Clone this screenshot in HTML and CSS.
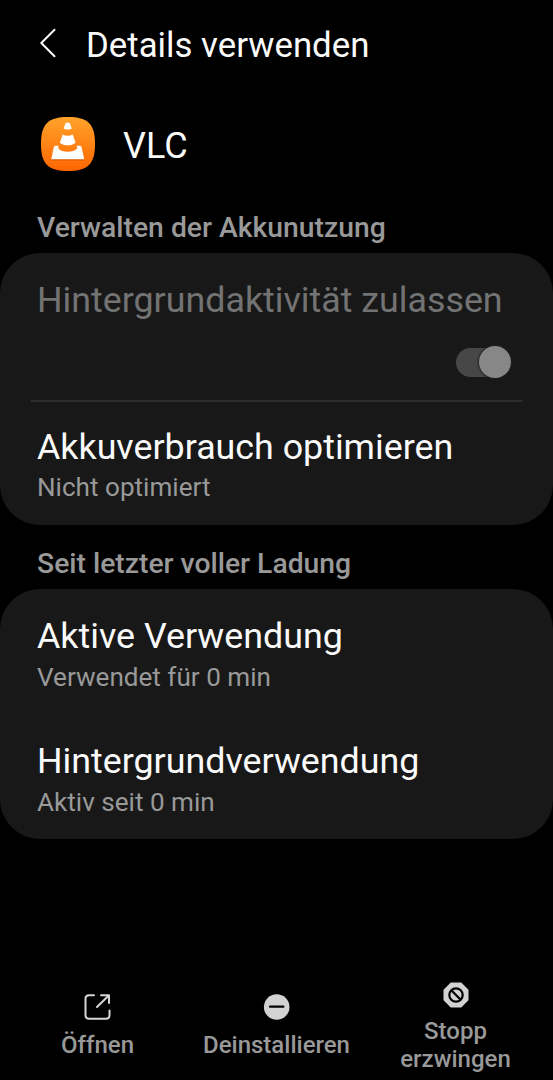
FILE: index.html
```html
<!DOCTYPE html>
<html lang="de">
<head>
<meta charset="utf-8">
<title>Details verwenden</title>
<link rel="stylesheet" href="styles.css">
</head>
<body>
<div class="screen">
  <header class="topbar">
    <svg class="back" viewBox="0 0 18 30"><path d="M15.5 1.7 2.3 15l13.2 13.3"/></svg>
    <h1 class="title">Details verwenden</h1>
  </header>
  <div class="app">
    <svg class="app-icon" viewBox="0 0 54 54">
      <defs><linearGradient id="orange" x1="0" y1="0" x2="0" y2="1"><stop offset="0" stop-color="#ffa32b"/><stop offset="1" stop-color="#ff6500"/></linearGradient></defs>
      <path fill="url(#orange)" d="M27 0C47 0 54 7 54 27S47 54 27 54 0 47 0 27 7 0 27 0Z"/>
      <path fill="#b84800" opacity=".55" d="M10.500 42h32.500v1.600h-32.500z"/>
      <path fill="#fff" d="M26.700 5.500c1.500 0 2.300.7 2.700 1.900l1.300 4c-2 1.500-6 1.500-8 0l1.300-4c.4-1.200 1.200-1.900 2.700-1.900ZM21.700 17.400c3 1.700 7 1.700 10 0l2.900 8.400c-4.200 3.400-11.600 3.400-15.800 0ZM14.800 28.700h2.900l-.6 2.600c3.800 4.700 15.400 4.700 19.200 0l-.6-2.600h2.900c1.100 0 1.700.5 2 1.600L43.200 42.200H10.200l2.600-11.900c.3-1.100.9-1.600 2-1.600Z"/>
    </svg>
    <span class="app-name">VLC</span>
  </div>
  <h2 class="section">Verwalten der Akkunutzung</h2>
  <div class="card">
    <div class="row row-switch">
      <div class="label disabled">Hintergrundaktivität zulassen</div>
      <div class="switch"><div class="thumb"></div></div>
    </div>
    <div class="row row-optimise">
      <div class="label">Akkuverbrauch optimieren</div>
      <div class="sub">Nicht optimiert</div>
    </div>
  </div>
  <h2 class="section">Seit letzter voller Ladung</h2>
  <div class="card">
    <div class="row row-usage">
      <div class="label">Aktive Verwendung</div>
      <div class="sub">Verwendet für 0 min</div>
    </div>
    <div class="row row-usage">
      <div class="label">Hintergrundverwendung</div>
      <div class="sub">Aktiv seit 0 min</div>
    </div>
  </div>
  <nav class="actions">
    <div class="action single">
      <svg class="action-icon" viewBox="0 0 28 28"><g fill="none" stroke="#d6d6d6" stroke-width="2" stroke-linecap="round" stroke-linejoin="round"><path d="M10 2.300H5Q1.500 2.300 1.500 5.800V22.200Q1.500 25.700 5 25.700H22Q25.500 25.700 25.500 22.200V17.500"/><path d="M17 2.300H25V10M24.500 2.800 13 14"/></g></svg>
      <span>Öffnen</span>
    </div>
    <div class="action single">
      <svg class="action-icon" viewBox="0 0 28 28"><circle cx="13.700" cy="14" r="12.800" fill="#d2d2d2"/><path d="M7 13.700h13.400" stroke="#000" stroke-width="2.200" stroke-linecap="round"/></svg>
      <span>Deinstallieren</span>
    </div>
    <div class="action">
      <svg class="action-icon" viewBox="0 0 28 28"><path fill="#d2d2d2" stroke="#d2d2d2" stroke-width="2" stroke-linejoin="round" d="M9.200 2.500h9.600l6.700 6.700v9.600l-6.700 6.700H9.200l-6.700-6.700V9.200Z"/><g fill="none" stroke="#000" stroke-width="2.200"><circle cx="14" cy="14" r="6.700"/><path d="m9.300 9.300 9.400 9.400"/></g></svg>
      <span>Stopp<br>erzwingen</span>
    </div>
  </nav>
</div>
</body>
</html>
```
FILE: styles.css
```css
body {
  margin: 0;
  background: #000;
  color: #fafafa;
  font-family: Roboto, sans-serif;
}
.screen {
  display: flex;
  flex-direction: column;
  height: 1080px;
  overflow: hidden;
}
.topbar {
  display: flex;
  align-items: center;
  gap: 29px;
  height: 90px;
  padding: 0 0 0 39px;
  box-sizing: border-box;
}
.back {
  width: 18px;
  height: 30px;
  margin-top: -4px;
  fill: none;
  stroke: #fafafa;
  stroke-width: 2;
  stroke-linecap: round;
  stroke-linejoin: round;
}
.title {
  margin: 0;
  font-size: 34.8px;
  font-weight: 400;
  line-height: 42px;
}
.app {
  display: flex;
  align-items: center;
  gap: 28.4px;
  height: 108px;
  padding-left: 40.6px;
}
.app-icon {
  width: 54px;
  height: 54px;
}
.app-name {
  font-size: 36px;
  line-height: 42px;
  padding-top: 3px;
}
.section {
  margin: 0;
  padding: 13.7px 37px 8.9px;
  font-size: 28.3px;
  font-weight: 500;
  line-height: 32px;
  color: #999;
}
.card {
  background: #181818;
  border-radius: 40px;
  margin-bottom: 9.4px;
}
.row {
  box-sizing: border-box;
  padding: 26px 37px 0;
}
.label {
  font-size: 35.8px;
  line-height: 42px;
  white-space: nowrap;
}
.label.disabled {
  color: #737373;
}
.sub {
  font-size: 26.1px;
  line-height: 32px;
  margin-top: 4px;
  color: #999;
}
.row-switch {
  height: 149px;
  margin: 0 31px;
  padding-left: 6px;
  padding-right: 11px;
  border-bottom: 2px solid #2e2e2e;
}
.switch {
  display: flex;
  justify-content: flex-end;
  align-items: center;
  width: 55px;
  height: 29px;
  margin: 27px 0 0 auto;
  border-radius: 15px;
  background: #474747;
}
.thumb {
  width: 32px;
  height: 32px;
  flex: none;
  border-radius: 50%;
  background: #878787;
  box-shadow: 0 0 2px 1px #222;
}
.row-optimise {
  height: 123px;
  padding-top: 24.4px;
}
.row-optimise .sub {
  margin-top: 3px;
}
.row-usage {
  height: 125.2px;
}
.actions {
  display: grid;
  grid-template-columns: 195px 163px 195px;
  align-items: center;
  height: 106px;
  margin-top: auto;
}
.action {
  display: flex;
  flex-direction: column;
  align-items: center;
  gap: 7.5px;
  font-size: 24px;
  font-weight: 500;
  line-height: 28px;
  text-align: center;
  color: #999;
}
.action.single {
  gap: 9.5px;
  padding-bottom: 2.5px;
}
.action-icon {
  width: 28px;
  height: 28px;
}
```
